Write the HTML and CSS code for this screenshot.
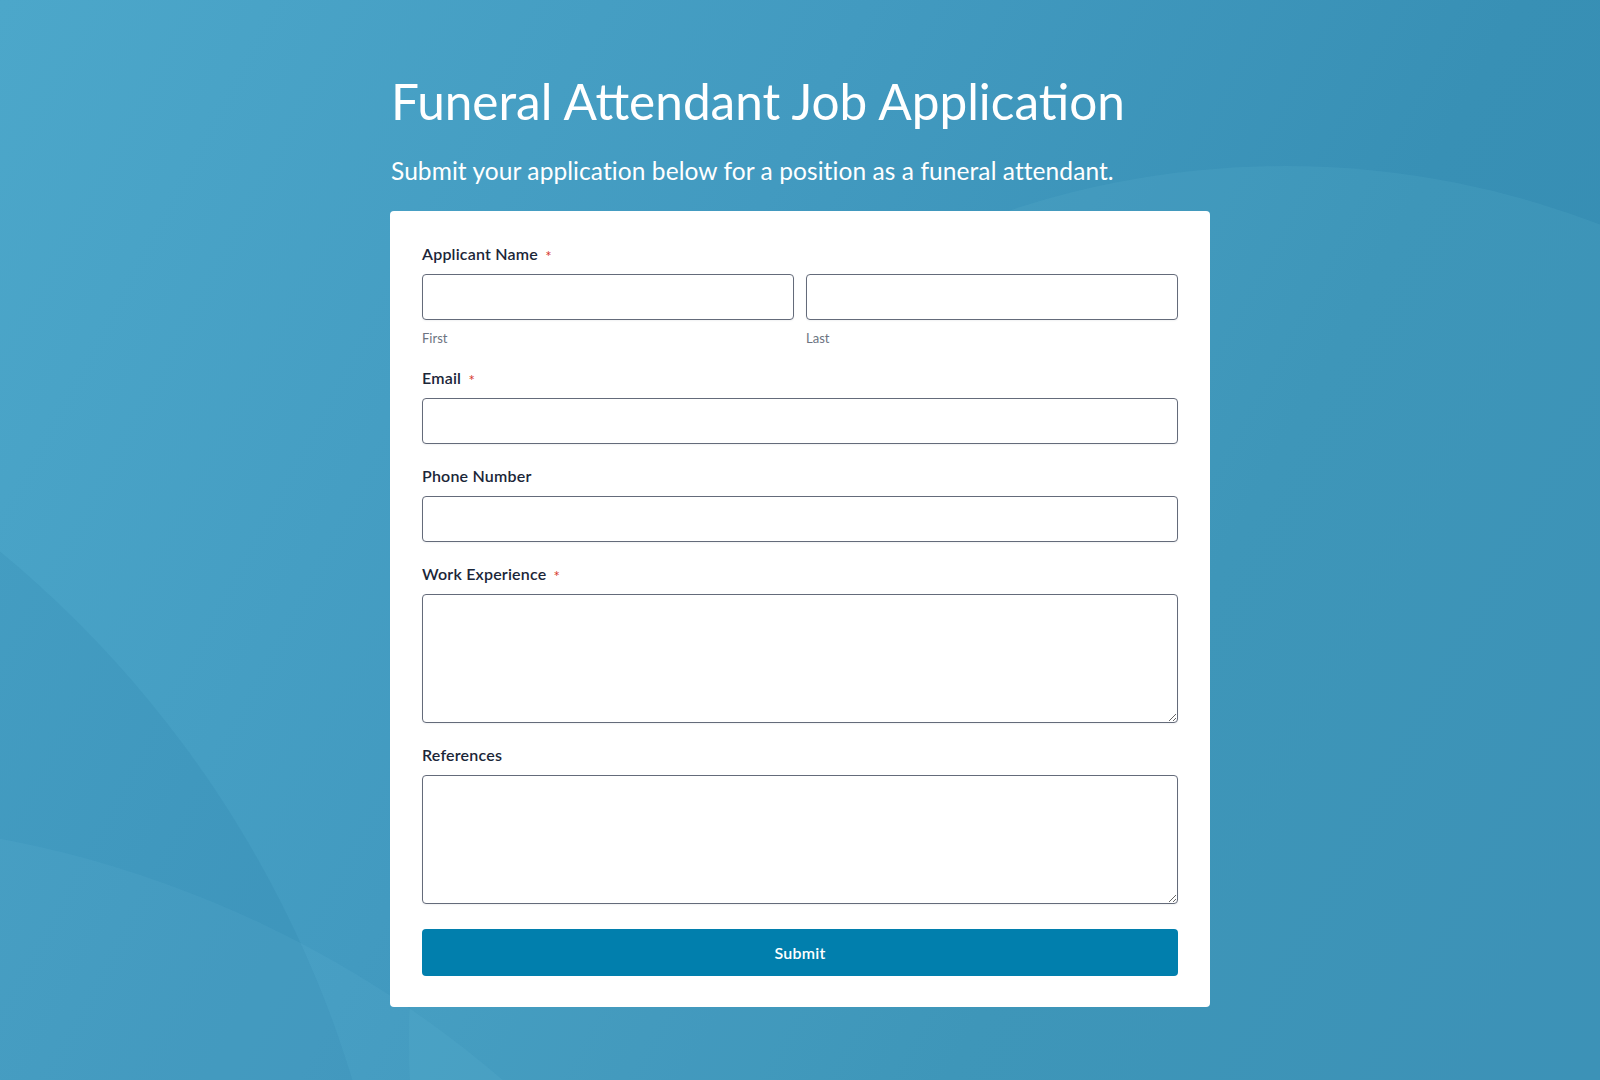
FILE: index.html
```html
<!DOCTYPE html>
<html lang="en">
<head>
<meta charset="utf-8">
<title>Funeral Attendant Job Application</title>
<link rel="stylesheet" href="styles.css">
</head>
<body>
<div class="backdrop" aria-hidden="true">
  <span class="swirl swirl-right"></span>
  <span class="swirl swirl-left-dark"></span>
  <span class="swirl swirl-left-light"></span>
</div>
<main class="page">
  <header class="intro">
    <h1 class="title">Funeral Attendant Job Application</h1>
    <p class="subtitle">Submit your application below for a position as a funeral attendant.</p>
  </header>
  <form class="card">
    <div class="field">
      <label class="label">Applicant Name <span class="req">*</span></label>
      <div class="name-row">
        <div class="name-part">
          <input class="input" type="text">
          <span class="sublabel">First</span>
        </div>
        <div class="name-part">
          <input class="input" type="text">
          <span class="sublabel">Last</span>
        </div>
      </div>
    </div>
    <div class="field">
      <label class="label">Email <span class="req">*</span></label>
      <input class="input" type="email">
    </div>
    <div class="field">
      <label class="label">Phone Number</label>
      <input class="input" type="tel">
    </div>
    <div class="field">
      <label class="label">Work Experience <span class="req">*</span></label>
      <textarea class="input area"></textarea>
    </div>
    <div class="field">
      <label class="label">References</label>
      <textarea class="input area"></textarea>
    </div>
    <button class="submit" type="button">Submit</button>
  </form>
</main>
</body>
</html>
```
FILE: styles.css
```css
* { box-sizing: border-box; }

html, body { height: 100%; }

body {
  margin: 0;
  font-family: "Lato", "Noto Sans", sans-serif;
  background: linear-gradient(118deg, #4ca7ca 0%, #429ac0 40%, #3890b5 70%, #358bb2 100%);
  overflow: hidden;
  position: relative;
}

/* soft decorative arcs behind the form */
.backdrop {
  position: absolute;
  inset: 0;
  overflow: hidden;
  pointer-events: none;
}
.swirl {
  position: absolute;
  border-radius: 50%;
}
.swirl-right {
  left: 409px;
  top: 166px;
  width: 1752px;
  height: 1752px;
  background: rgba(110, 190, 220, 0.13);
}
.swirl-left-dark {
  left: -1800px;
  top: 300px;
  width: 2200px;
  height: 2200px;
  background: rgba(20, 100, 140, 0.09);
}
.swirl-left-light {
  left: -1280px;
  top: 820px;
  width: 2160px;
  height: 2160px;
  background: rgba(120, 200, 230, 0.10);
}

.page {
  position: relative;
  width: 820px;
  margin: 0 auto;
  padding-top: 72px;
}

.intro { padding-left: 1px; }

.title {
  margin: 0;
  color: #fff;
  font-weight: 400;
  font-size: 49.5px;
  line-height: 58px;
  letter-spacing: 0;
}

.subtitle {
  margin: 26px 0 0;
  color: #fff;
  font-size: 24.5px;
  line-height: 30px;
  letter-spacing: 0.08px;
}

.card {
  margin-top: 25px;
  background: #fff;
  border-radius: 4px;
  padding: 33px 32px 31px;
  display: flex;
  flex-direction: column;
}

.field {
  display: flex;
  flex-direction: column;
  margin-bottom: 22px;
}

.label {
  font-size: 16px;
  line-height: 20px;
  font-weight: 600;
  letter-spacing: 0.2px;
  color: #1b2638;
  margin-bottom: 10px;
}

.req {
  position: relative;
  top: 2px;
  color: #d6362b;
  font-size: 15px;
  font-weight: 400;
  margin-left: 3px;
}

.name-row {
  display: flex;
  gap: 12px;
}
.name-part {
  flex: 1;
  display: flex;
  flex-direction: column;
}

.sublabel {
  margin-top: 10px;
  font-size: 13px;
  line-height: 16px;
  color: #6c7381;
}

.input {
  display: block;
  width: 100%;
  height: 46px;
  border: 1px solid #646b7a;
  border-radius: 4px;
  background: #fff;
  box-shadow: 0 1px 2px rgba(20, 30, 50, 0.06);
  font: inherit;
  outline: none;
}

.area {
  height: 129px;
  resize: vertical;
}

.submit {
  margin-top: 3px;
  height: 47px;
  border: none;
  border-radius: 4px;
  background: #017fad;
  color: #fff;
  font-family: "Lato", "Noto Sans", sans-serif;
  font-size: 16px;
  font-weight: 600;
  letter-spacing: 0.2px;
  cursor: pointer;
}
```
